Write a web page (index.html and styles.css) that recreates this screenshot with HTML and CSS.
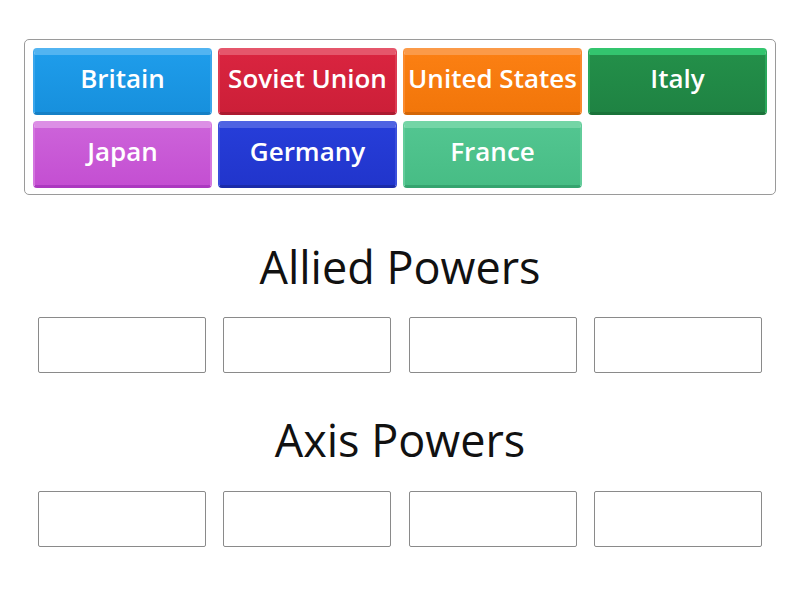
FILE: index.html
```html
<!DOCTYPE html>
<html>
<head>
<meta charset="utf-8">
<link rel="stylesheet" href="styles.css">
</head>
<body>
<div class="bank">
  <div class="tile blue">Britain</div>
  <div class="tile red">Soviet Union</div>
  <div class="tile orange">United States</div>
  <div class="tile green">Italy</div>
  <div class="tile purple">Japan</div>
  <div class="tile navy">Germany</div>
  <div class="tile mint">France</div>
</div>
<div class="group first">
  <h2 class="title">Allied Powers</h2>
  <div class="slots">
    <div class="slot"></div><div class="slot"></div><div class="slot"></div><div class="slot"></div>
  </div>
</div>
<div class="group second">
  <h2 class="title">Axis Powers</h2>
  <div class="slots">
    <div class="slot"></div><div class="slot"></div><div class="slot"></div><div class="slot"></div>
  </div>
</div>
</body>
</html>
```
FILE: styles.css
```css
html, body {
  margin: 0;
  padding: 0;
  background: #fff;
  font-family: "Open Sans", "Liberation Sans", sans-serif;
}
.bank {
  margin: 39px 24px 0 24px;
  border: 1px solid #9a9a9a;
  border-radius: 5px;
  padding: 8px 8px 6px 8px;
  display: grid;
  grid-template-columns: repeat(4, 1fr);
  grid-auto-rows: 67px;
  gap: 6px;
}
.tile {
  box-sizing: border-box;
  border-radius: 4px;
  border-style: solid;
  border-width: 7px 2px 3px 2px;
  color: #fff;
  font-weight: 600;
  font-size: 26px;
  display: flex;
  align-items: center;
  justify-content: center;
  padding-bottom: 12px;
  white-space: nowrap;
}
.blue { background: linear-gradient(#1e9cea, #1790dd); border-color: #52b4f1 #3aa6ec #1580c6 #3aa6ec; }
.red { background: linear-gradient(#d9243f, #cc1f38); border-color: #e5566b #dc3b52 #ad1a30 #dc3b52; }
.orange { background: linear-gradient(#fb7f12, #f2760a); border-color: #fb9a48 #fa8a2c #d46606 #fa8a2c; }
.green { background: linear-gradient(#238f49, #1f8343); border-color: #33c56e #2aa85b #1a733a #2aa85b; }
.purple { background: linear-gradient(#cc62d9, #c44fd2); border-color: #dc8fe5 #d476df #ac38c0 #d476df; }
.navy { background: linear-gradient(#263dd8, #2135cc); border-color: #4f63e2 #3a4fdc #1b2ba9 #3a4fdc; }
.mint { background: linear-gradient(#52c590, #47bd85); border-color: #74d5a6 #62cc9a #35a46f #62cc9a; }

.title {
  margin: 0;
  font-weight: 400;
  font-size: 45px;
  line-height: 60px;
  text-align: center;
  color: #111;
}
.group.first { margin-top: 42px; }
.group.second { margin-top: 37px; }
.group.second .slots { margin-top: 21px; }
.slots {
  margin: 20px 38px 0 38px;
  display: grid;
  grid-template-columns: repeat(4, 168px);
  justify-content: space-between;
}
.slot {
  box-sizing: border-box;
  height: 56px;
  border: 1px solid #8a8a8a;
  border-radius: 2px;
}
```
